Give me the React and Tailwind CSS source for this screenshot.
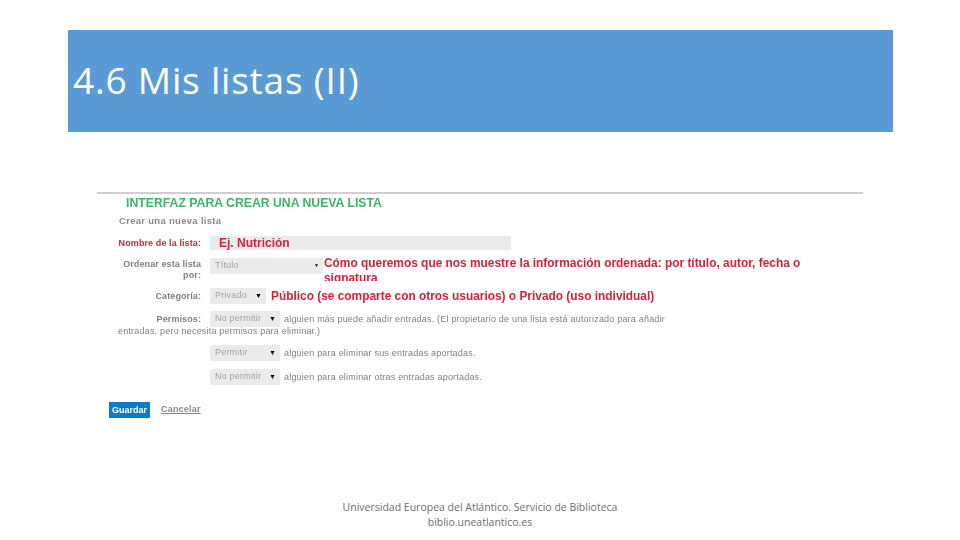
const LABEL = 'w-[92px] shrink-0 text-right text-[9px] leading-[11px] font-bold text-[#808080] tracking-[0.1px]';
const HELP = 'text-[9px] leading-[11px] text-[#808080] tracking-[0.2px] whitespace-nowrap';
const NOTE = 'text-[11.9px] leading-[14.5px] font-bold text-[#d5213c]';

function FakeSelect({ value, width, blackArrow = true }) {
  return (
    <div className={`${width} h-[16px] shrink-0 bg-[#ebebeb] flex items-center justify-between pl-[5px] pr-[4px]`}>
      <span className="text-[9px] text-[#a3a3a3] tracking-[0.2px]">{value}</span>
      <span className={blackArrow ? 'text-[7px] text-black' : 'text-[5px] text-black'}>▼</span>
    </div>
  );
}

export default function App() {
  return (
    <div className="w-[960px] h-[540px] bg-white flex flex-col pt-[30px] font-['Liberation_Sans',sans-serif] overflow-hidden">
      {/* Slide title */}
      <div className="ml-[68px] w-[825px] h-[102px] shrink-0 bg-[#5b9bd5] flex items-center pl-[5px] pb-[4px]">
        <h1 className="text-[37px] leading-none text-white font-['Open_Sans',sans-serif] tracking-[0.8px]">4.6 Mis listas (II)</h1>
      </div>

      {/* Embedded form */}
      <div className="ml-[97px] w-[766px] h-[2px] mt-[60px] shrink-0 bg-[#cfcfcf]" />
      <div className="ml-[97px] w-[766px] shrink-0 pl-[12px] flex flex-col blur-[0.3px]">
        <div className="mt-[2px] pl-[17px] text-[12.25px] leading-[14px] font-bold text-[#3cb55e]">INTERFAZ PARA CREAR UNA NUEVA LISTA</div>
        <div className="mt-[5px] pl-[10px] text-[9.5px] leading-[12px] font-bold text-[#8a8a8a] tracking-[0.3px]">Crear una nueva lista</div>

        <div className="mt-[9px] flex items-center gap-[9px] h-[14px]">
          <div className={`${LABEL} !text-[#c8283f]`}>Nombre de la lista:</div>
          <div className="w-[301px] h-[14px] bg-[#ebebeb] pl-[9px] text-[12px] leading-[14px] font-bold text-[#d5213c]">Ej. Nutrición</div>
        </div>

        <div className="mt-[8px] flex items-start gap-[9px] h-[30px]">
          <div className={`${LABEL} pt-[1px]`}>Ordenar esta lista<br />por:</div>
          <FakeSelect value="Título" width="w-[113px]" blackArrow={false} />
          <div className={`${NOTE} w-[490px] -ml-[8px] -mt-[2px] h-[25px] overflow-hidden`}>
            Cómo queremos que nos muestre la información ordenada: por título, autor, fecha o signatura
          </div>
        </div>

        <div className="flex items-center gap-[9px] h-[16px]">
          <div className={LABEL}>Categoría:</div>
          <FakeSelect value="Privado" width="w-[56px]" />
          <div className={`${NOTE} -ml-[4px]`}>Público (se comparte con otros usuarios) o Privado (uso individual)</div>
        </div>

        <div className="mt-[7px] flex items-center gap-[9px] h-[16px]">
          <div className={LABEL}>Permisos:</div>
          <FakeSelect value="No permitir" width="w-[70px]" />
          <div className={`${HELP} -ml-[5px]`}>alguien más puede añadir entradas. (El propietario de una lista está autorizado para añadir</div>
        </div>
        <div className={`${HELP} -mt-[1px] ml-[9px]`}>entradas, pero necesita permisos para eliminar.)</div>

        <div className="mt-[8px] pl-[101px] flex items-center gap-[9px] h-[16px]">
          <FakeSelect value="Permitir" width="w-[70px]" />
          <div className={`${HELP} -ml-[5px]`}>alguien para eliminar sus entradas aportadas.</div>
        </div>
        <div className="mt-[8px] pl-[101px] flex items-center gap-[9px] h-[16px]">
          <FakeSelect value="No permitir" width="w-[70px]" />
          <div className={`${HELP} -ml-[5px]`}>alguien para eliminar otras entradas aportadas.</div>
        </div>

        <div className="mt-[17px] flex items-center h-[16px]">
          <div className="w-[41px] h-[16px] bg-[#0b7cc7] text-white text-[9px] font-bold leading-[16px] text-center">Guardar</div>
          <div className="ml-[11px] text-[9px] font-bold text-[#8a8a8a] underline tracking-[0.2px]">Cancelar</div>
        </div>
      </div>

      {/* Footer */}
      <div className="mt-auto mb-[10px] text-center font-['Open_Sans',sans-serif] text-[10.5px] leading-[15px] text-[#6e6e6e]">
        Universidad Europea del Atlántico. Servicio de Biblioteca<br />biblio.uneatlantico.es
      </div>
    </div>
  );
}
